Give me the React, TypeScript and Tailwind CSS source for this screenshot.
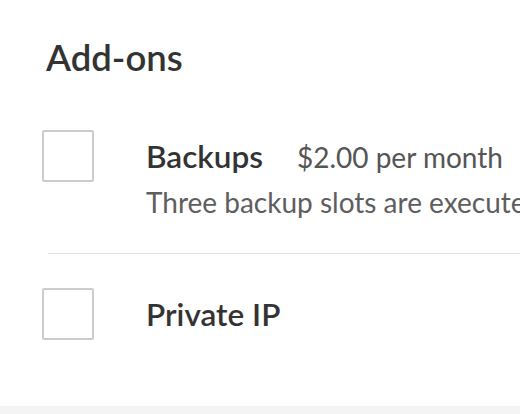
import React, { useState } from 'react';

interface Addon {
  id: string;
  name: string;
  price?: string;
  description?: string;
}

const addons: Addon[] = [
  {
    id: 'backups',
    name: 'Backups',
    price: '$2.00 per month',
    description: 'Three backup slots are executed and rotated automatically.',
  },
  { id: 'private-ip', name: 'Private IP' },
];

const AddonRow = ({ addon, last }: { addon: Addon; last: boolean }) => {
  const [checked, setChecked] = useState(false);

  return (
    <div className={last ? 'pt-[35px] pb-[66px]' : 'pt-[52px] pb-[35px]'}>
      <div className="flex items-start pl-[42px]">
        <button
          type="button"
          aria-pressed={checked}
          onClick={() => setChecked(!checked)}
          className="w-[52px] h-[52px] shrink-0 border-2 border-[#cccccc] rounded-[2px] bg-white"
        />
        <div className="ml-[52px] pt-2 whitespace-nowrap">
          <div className="flex items-baseline leading-[36px]">
            <span className="text-[31.5px] font-semibold text-[#333333]">{addon.name}</span>
            {addon.price && (
              <span className="ml-[34px] text-[28px] text-[#555555]">{addon.price}</span>
            )}
          </div>
          {addon.description && (
            <p className="mt-3 text-[28px] leading-[31px] text-[#5e5e5e]">{addon.description}</p>
          )}
        </div>
      </div>
      {!last && <div className="ml-[48px] mt-[35px] -mb-[36px] h-px bg-[#e3e3e3]" />}
    </div>
  );
};

const App = () => {
  return (
    <div
      className="w-[520px] h-[414px] overflow-hidden bg-[#f4f4f4]"
      style={{ fontFamily: 'Lato, "Noto Sans", sans-serif' }}
    >
      <section className="bg-white">
        <h2 className="pt-9 pl-[46px] text-[36.5px] leading-[42px] font-semibold text-[#333333]">
          Add-ons
        </h2>
        {addons.map((addon, index) => (
          <AddonRow key={addon.id} addon={addon} last={index === addons.length - 1} />
        ))}
      </section>
    </div>
  );
};

export default App;
